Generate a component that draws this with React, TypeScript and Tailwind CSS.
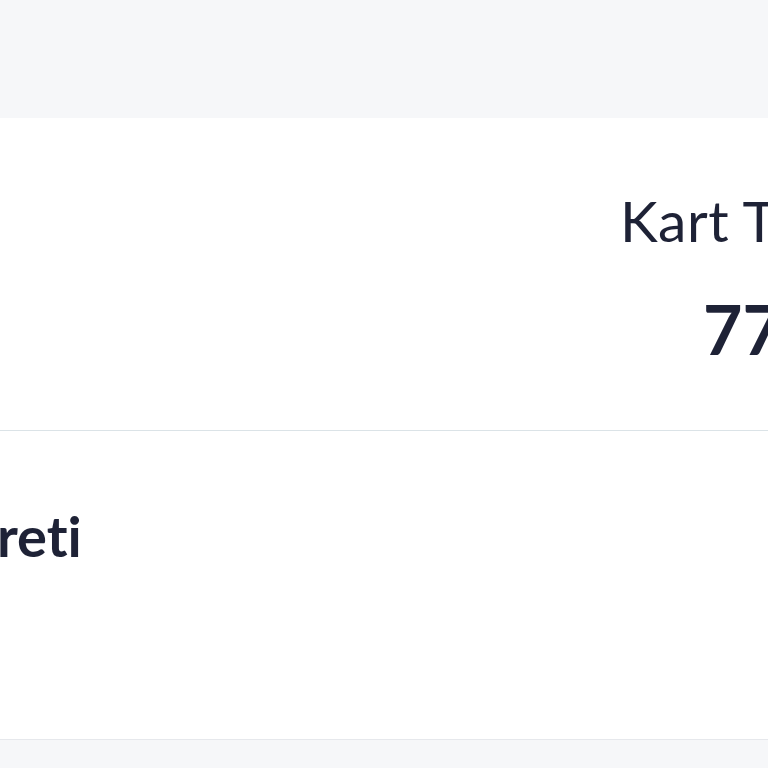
export default function App() {
  return (
    <div
      className="w-[768px] h-[768px] overflow-hidden flex flex-col bg-[#f6f7f9] text-[#1e2236] [font-variant-ligatures:none]"
      style={{ fontFamily: 'Lato, "Noto Sans", sans-serif' }}
    >
      <div className="h-[118px] shrink-0 bg-[#f6f7f9]" />

      <section className="h-[313px] shrink-0 bg-white border-b border-[#dbe3e7] flex flex-col">
        <div className="pl-[620px] pt-[68px] whitespace-nowrap">
          <p className="text-[57px] leading-[68px] font-normal tracking-[0.5px]">Kart Toplamı</p>
          <p className="pl-[83px] mt-[40px] text-[68px] leading-[70px] font-bold">775,00 ₺</p>
        </div>
      </section>

      <section className="h-[309px] shrink-0 bg-white border-b border-[#e6e8ec] flex flex-col">
        <div className="ml-[-3px] pt-[72px] whitespace-nowrap">
          <p className="text-[56px] leading-[66px] font-bold">reti</p>
        </div>
      </section>

      <div className="flex-1 bg-[#f6f7f9]" />
    </div>
  );
}
